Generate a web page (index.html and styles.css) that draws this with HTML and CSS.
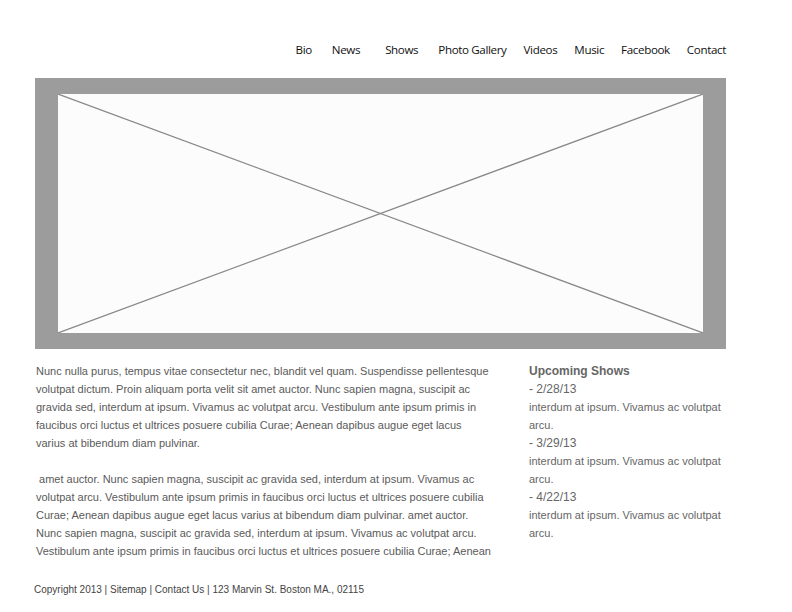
FILE: index.html
```html
<!DOCTYPE html>
<html>
<head>
<meta charset="utf-8">
<link rel="stylesheet" href="styles.css">
</head>
<body>
<div class="page">
  <nav class="nav">
    <a>Bio</a>
    <a class="wide">News</a>
    <a class="wider">Shows</a>
    <a class="wide">Photo Gallery</a>
    <a>Videos</a>
    <a>Music</a>
    <a>Facebook</a>
    <a>Contact</a>
  </nav>
  <div class="hero">
    <div class="hero-inner">
      <svg class="xmark" viewBox="0 0 645 239" preserveAspectRatio="none">
        <line x1="0" y1="0" x2="645" y2="239" stroke="#888" stroke-width="1.2"/>
        <line x1="645" y1="0" x2="0" y2="239" stroke="#888" stroke-width="1.2"/>
      </svg>
    </div>
  </div>
  <div class="content">
    <div class="main">
      <p>Nunc nulla purus, tempus vitae consectetur nec, blandit vel quam. Suspendisse pellentesque volutpat dictum. Proin aliquam porta velit sit amet auctor. Nunc sapien magna, suscipit ac gravida sed, interdum at ipsum. Vivamus ac volutpat arcu. Vestibulum ante ipsum primis in faucibus orci luctus et ultrices posuere cubilia Curae; Aenean dapibus augue eget lacus varius at bibendum diam pulvinar.</p>
      <p>&nbsp;amet auctor. Nunc sapien magna, suscipit ac gravida sed, interdum at ipsum. Vivamus ac volutpat arcu. Vestibulum ante ipsum primis in faucibus orci luctus et ultrices posuere cubilia Curae; Aenean dapibus augue eget lacus varius at bibendum diam pulvinar. amet auctor. Nunc sapien magna, suscipit ac gravida sed, interdum at ipsum. Vivamus ac volutpat arcu. Vestibulum ante ipsum primis in faucibus orci luctus et ultrices posuere cubilia Curae; Aenean</p>
    </div>
    <aside class="side">
      <h2>Upcoming Shows</h2>
      <div class="date">- 2/28/13</div>
      <div>interdum at ipsum. Vivamus ac volutpat arcu.</div>
      <div class="date">- 3/29/13</div>
      <div>interdum at ipsum. Vivamus ac volutpat arcu.</div>
      <div class="date">- 4/22/13</div>
      <div>interdum at ipsum. Vivamus ac volutpat arcu.</div>
    </aside>
  </div>
  <footer class="footer">Copyright 2013 | Sitemap | Contact Us | 123 Marvin St. Boston MA., 02115</footer>
</div>
</body>
</html>
```
FILE: styles.css
```css
html, body {
  margin: 0;
  padding: 0;
  background: #ffffff;
}
.page {
  width: 691px;
  padding: 0 0 0 35px;
}
.nav {
  display: flex;
  justify-content: flex-end;
  gap: 17px;
  padding-top: 41px;
  height: 78px;
  box-sizing: border-box;
  font-family: "Open Sans", "Noto Sans", sans-serif;
  font-size: 11.6px;
  letter-spacing: -0.36px;
  color: #111;
  line-height: 18px;
}
.nav a.wide { margin-left: 3px; }
.nav a.wider { margin-left: 8px; }
.hero {
  background: #9c9c9c;
  padding: 16px 23px;
}
.hero-inner {
  background: #fcfcfc;
  height: 239px;
}
.xmark {
  display: block;
  width: 100%;
  height: 100%;
}
.content {
  display: flex;
  gap: 38px;
  padding-top: 13px;
  font-family: "Liberation Sans", Arial, sans-serif;
  font-size: 11px;
  line-height: 18px;
  color: #5a5a5a;
}
.main {
  width: 455px;
  padding-left: 1px;
}
.main p {
  margin: 0 0 18px 0;
}
.main p:last-child { margin-bottom: 0; }
.side {
  width: 195px;
  color: #666;
}
.side .date {
  font-size: 12px;
}
.side h2 {
  margin: 0;
  font-size: 12px;
  font-weight: bold;
  line-height: 18px;
  color: #666;
}
.footer {
  margin-top: 21px;
  margin-left: -1px;
  font-family: "Liberation Sans", Arial, sans-serif;
  font-size: 10px;
  line-height: 18px;
  color: #444;
}
```
